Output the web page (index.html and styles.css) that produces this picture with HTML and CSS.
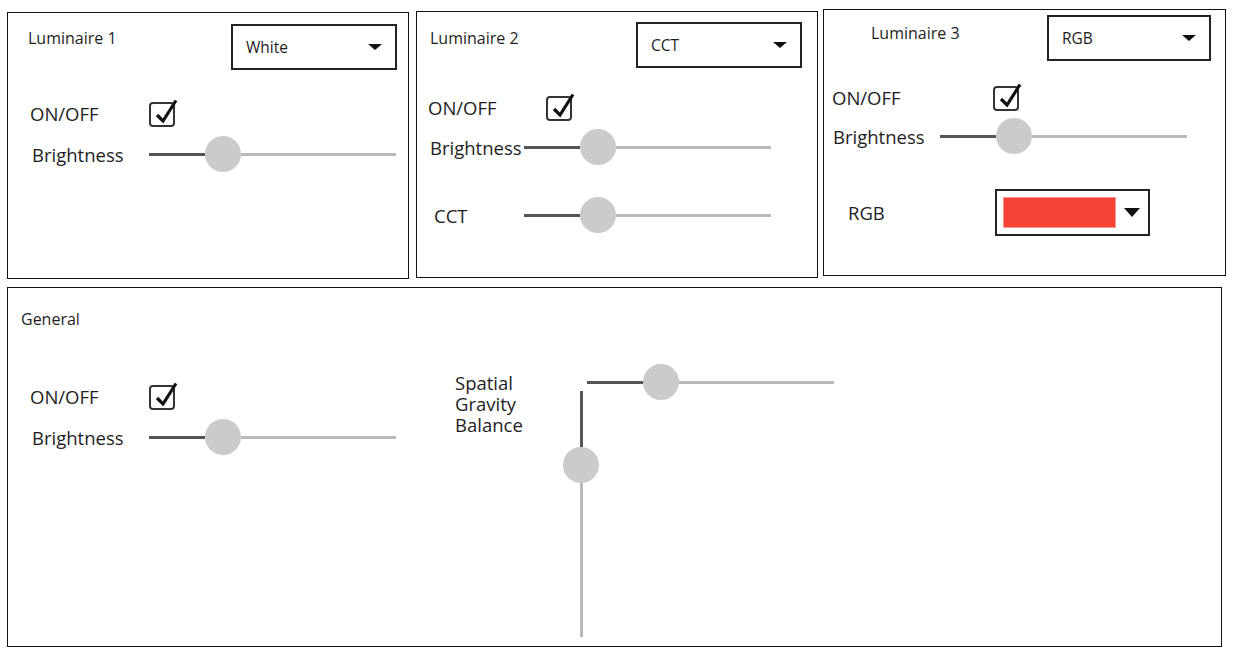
FILE: index.html
```html
<!DOCTYPE html>
<html lang="en">

<head>
    <meta charset="UTF-8">
    <meta name="viewport" content="width=device-width, initial-scale=1">
    <title>Luminaire Control</title>
    <link rel="stylesheet" href="styles.css">
</head>

<body>
    <div class="top-row">
        <!-- Luminaire 1: white -->
        <div class="panel p1">
            <div class="panel-head">
                <span class="title">Luminaire 1</span>
                <div class="select"><span>White</span><span class="arrow"></span></div>
            </div>
            <div class="panel-body">
                <div class="row row-check">
                    <span class="label">ON/OFF</span>
                    <svg class="check" width="30" height="28" viewBox="0 0 30 28">
                        <rect x="1" y="4" width="24" height="23" rx="3" fill="none" stroke="#333" stroke-width="2" />
                        <path d="M8 16 L14 22 L27 1.5" fill="none" stroke="#111" stroke-width="3.2" />
                    </svg>
                </div>
                <div class="row row-slider">
                    <span class="label">Brightness</span>
                    <div class="slider"><span class="fill"></span><span class="thumb"></span><span class="rest"></span></div>
                </div>
            </div>
        </div>

        <!-- Luminaire 2: CCT -->
        <div class="panel p2">
            <div class="panel-head">
                <span class="title">Luminaire 2</span>
                <div class="select"><span>CCT</span><span class="arrow"></span></div>
            </div>
            <div class="panel-body">
                <div class="row row-check">
                    <span class="label">ON/OFF</span>
                    <svg class="check" width="30" height="28" viewBox="0 0 30 28">
                        <rect x="1" y="4" width="24" height="23" rx="3" fill="none" stroke="#333" stroke-width="2" />
                        <path d="M8 16 L14 22 L27 1.5" fill="none" stroke="#111" stroke-width="3.2" />
                    </svg>
                </div>
                <div class="row row-slider">
                    <span class="label">Brightness</span>
                    <div class="slider"><span class="fill"></span><span class="thumb"></span><span class="rest"></span></div>
                </div>
                <div class="row row-slider row-cct">
                    <span class="label">CCT</span>
                    <div class="slider"><span class="fill"></span><span class="thumb"></span><span class="rest"></span></div>
                </div>
            </div>
        </div>

        <!-- Luminaire 3: RGB -->
        <div class="panel p3">
            <div class="panel-head">
                <span class="title">Luminaire 3</span>
                <div class="select"><span>RGB</span><span class="arrow"></span></div>
            </div>
            <div class="panel-body">
                <div class="row row-check">
                    <span class="label">ON/OFF</span>
                    <svg class="check" width="30" height="28" viewBox="0 0 30 28">
                        <rect x="1" y="4" width="24" height="23" rx="3" fill="none" stroke="#333" stroke-width="2" />
                        <path d="M8 16 L14 22 L27 1.5" fill="none" stroke="#111" stroke-width="3.2" />
                    </svg>
                </div>
                <div class="row row-slider">
                    <span class="label">Brightness</span>
                    <div class="slider"><span class="fill"></span><span class="thumb"></span><span class="rest"></span></div>
                </div>
                <div class="row row-color">
                    <span class="label">RGB</span>
                    <div class="color-select"><span class="swatch"></span><span class="arrow arrow-big"></span></div>
                </div>
            </div>
        </div>
    </div>

    <!-- General -->
    <div class="panel general">
        <div class="panel-head">
            <span class="title">General</span>
        </div>
        <div class="general-body">
            <div class="general-left">
                <div class="row row-check">
                    <span class="label">ON/OFF</span>
                    <svg class="check" width="30" height="28" viewBox="0 0 30 28">
                        <rect x="1" y="4" width="24" height="23" rx="3" fill="none" stroke="#333" stroke-width="2" />
                        <path d="M8 16 L14 22 L27 1.5" fill="none" stroke="#111" stroke-width="3.2" />
                    </svg>
                </div>
                <div class="row row-slider">
                    <span class="label">Brightness</span>
                    <div class="slider"><span class="fill"></span><span class="thumb"></span><span class="rest"></span></div>
                </div>
            </div>
            <div class="spatial">
                <div class="spatial-label">Spatial<br>Gravity<br>Balance</div>
                <div class="spatial-sliders">
                    <div class="slider slider-h"><span class="fill"></span><span class="thumb"></span><span class="rest"></span></div>
                    <div class="vslider"><span class="fill"></span><span class="thumb"></span><span class="rest"></span></div>
                </div>
            </div>
        </div>
    </div>
</body>

</html>
```

FILE: styles.css
```css
body {
    font-family: 'Open Sans', 'Noto Sans', sans-serif;
    background: #fff;
    color: #1e1e1e;
    margin: 0;
    padding: 0;
}

.top-row {
    display: flex;
    align-items: flex-start;
    padding-left: 7px;
}

.panel {
    box-sizing: border-box;
    border: 1px solid #111;
    height: 267px;
}

.p1 {
    width: 402px;
    margin-top: 12px;
}

.p2 {
    width: 402px;
    margin-left: 7px;
    margin-top: 11px;
}

.p3 {
    width: 403px;
    margin-left: 5px;
    margin-top: 9px;
}

.panel-head {
    display: flex;
    justify-content: space-between;
    align-items: flex-start;
}

.title {
    font-size: 16px;
    line-height: 20px;
}

.select {
    box-sizing: border-box;
    width: 166px;
    height: 46px;
    border: 2px solid #222;
    display: flex;
    align-items: center;
    justify-content: space-between;
    padding: 0 13px;
    font-size: 15.5px;
}

.arrow {
    width: 0;
    height: 0;
    border-left: 7.5px solid transparent;
    border-right: 7.5px solid transparent;
    border-top: 6px solid #111;
}

.arrow-big {
    border-left-width: 8px;
    border-right-width: 8px;
    border-top-width: 9px;
}

/* rows */
.row {
    display: flex;
    align-items: center;
    font-size: 18.5px;
}

.row .label {
    flex: none;
}

.row-check {
    height: 32px;
}

.row-slider {
    height: 36px;
}

.check {
    display: block;
}

/* sliders */
.slider {
    display: flex;
    align-items: center;
    width: 247px;
    height: 36px;
}

.slider .fill {
    width: 56px;
    height: 3px;
    background: #555;
}

.thumb {
    flex: none;
    width: 36px;
    height: 36px;
    border-radius: 50%;
    background: #cbcbcb;
}

.slider .rest {
    flex: 1;
    height: 3px;
    background: #b9b9b9;
}

.vslider {
    display: flex;
    flex-direction: column;
    align-items: center;
    width: 36px;
    height: 246px;
    margin-top: -9px;
}

.vslider .fill {
    width: 3px;
    height: 56px;
    background: #555;
}

.vslider .rest {
    flex: 1;
    width: 3px;
    background: #b9b9b9;
}

/* luminaire 1 */
.p1 .panel-head {
    padding: 11px 11px 0 20px;
}

.p1 .title {
    margin-top: 4px;
}

.p1 .panel-body {
    padding-left: 22px;
}

.p1 .row-check {
    margin-top: 27px;
}

.p1 .row-check .label {
    width: 119px;
}

.p1 .row-slider {
    margin-top: 7px;
}

.p1 .row-slider .label {
    width: 117px;
    padding-left: 2px;
}

/* luminaire 2 */
.p2 .panel-head {
    padding: 10px 15px 0 13px;
}

.p2 .title {
    margin-top: 6px;
}

.p2 .panel-body {
    padding-left: 11px;
}

.p2 .row-check {
    margin-top: 23px;
}

.p2 .row-check .label {
    width: 118px;
}

.p2 .row-slider {
    margin-top: 6px;
}

.p2 .row-slider .label {
    width: 94px;
    padding-left: 2px;
}

.p2 .row-cct {
    margin-top: 32px;
}

.p2 .row-cct .label {
    width: 90px;
    padding-left: 6px;
}

/* luminaire 3 */
.p3 .panel-head {
    padding: 5px 14px 0 47px;
}

.p3 .title {
    margin-top: 8px;
}

.p3 .select {
    width: 164px;
}

.p3 .panel-body {
    padding-left: 8px;
}

.p3 .row-check {
    margin-top: 20px;
}

.p3 .row-check .label {
    width: 161px;
}

.p3 .row-slider {
    margin-top: 5px;
}

.p3 .row-slider .label {
    width: 107px;
    padding-left: 1px;
}

.row-color {
    margin-top: 35px;
}

.row-color .label {
    width: 147px;
    padding-left: 16px;
}

.color-select {
    box-sizing: border-box;
    width: 155px;
    height: 47px;
    border: 2px solid #222;
    display: flex;
    align-items: center;
    padding: 0 8px 0 6px;
    gap: 8px;
}

.swatch {
    width: 111px;
    height: 29px;
    background: #f44336;
    border: 1px solid #f8958d;
}

/* general */
.general {
    width: 1215px;
    height: 360px;
    margin: 8px 0 0 7px;
}

.general .panel-head {
    padding-left: 13px;
}

.general .title {
    margin-top: 21px;
}

.general-body {
    display: flex;
    align-items: flex-start;
    margin-top: 35px;
}

.general-left {
    box-sizing: border-box;
    width: 447px;
    padding-left: 22px;
}

.general-left .row-check {
    margin-top: 16px;
}

.general-left .row-check .label {
    width: 119px;
}

.general-left .row-slider {
    margin-top: 7px;
}

.general-left .row-slider .label {
    width: 117px;
    padding-left: 2px;
}

.spatial {
    display: flex;
    align-items: flex-start;
}

.spatial-label {
    width: 108px;
    margin-top: 8px;
    font-size: 18.5px;
    line-height: 21px;
}

.spatial-sliders {
    display: flex;
    flex-direction: column;
}

.slider-h {
    margin-left: 24px;
}
```
